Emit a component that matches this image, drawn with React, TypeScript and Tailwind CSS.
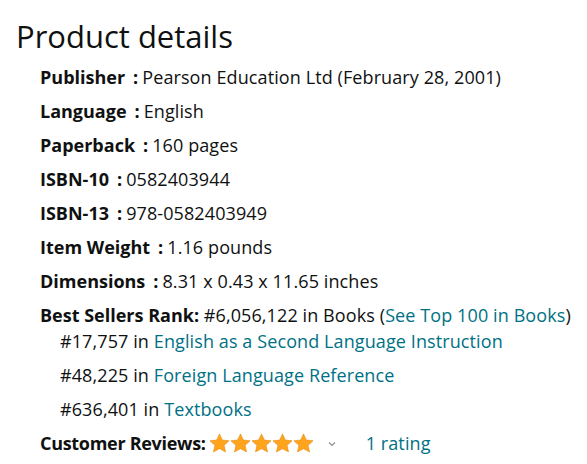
import React from "react";

const rows: [string, string][] = [
  ["Publisher", "Pearson Education Ltd (February 28, 2001)"],
  ["Language", "English"],
  ["Paperback", "160 pages"],
  ["ISBN-10", "0582403944"],
  ["ISBN-13", "978-0582403949"],
  ["Item Weight", "1.16 pounds"],
  ["Dimensions", "8.31 x 0.43 x 11.65 inches"],
];

const ranks: [string, string][] = [
  ["#17,757", "English as a Second Language Instruction"],
  ["#48,225", "Foreign Language Reference"],
  ["#636,401", "Textbooks"],
];

function Star() {
  return (
    <svg viewBox="0 0 24 24" className="w-[21px] h-[21px]">
      <path
        d="M12 1l3.3 7 7.7.9-5.7 5.2 1.6 7.6L12 17.9l-6.9 3.8 1.6-7.6L1 8.9l7.7-.9z"
        fill="#ffa41c"
        stroke="#e3850b"
        strokeWidth="0.6"
      />
    </svg>
  );
}

export default function App() {
  return (
    <div className="w-[587px] h-[464px] bg-white text-[#0f1111] font-['Open_Sans',sans-serif] overflow-hidden">
      <h1 className="pl-[16px] pt-[14px] text-[31px] leading-[44px]">Product details</h1>
      <ul className="pl-[40px] text-[18px] leading-[24px] tracking-[0.1px]">
        {rows.map(([k, v], i) => (
          <li key={k} className={i === 0 ? "mt-[7px]" : "mt-[10px]"}>
            <span className="font-bold tracking-normal">
              {k}
              <span className="ml-[8px] mr-[4px]">:</span>
            </span>
            {v}
          </li>
        ))}
        <li className="mt-[10px]">
          <span className="font-bold tracking-normal">Best Sellers Rank:</span> #6,056,122 in Books (
          <span className="text-[#007185]">See Top 100 in Books</span>)
          <ul className="pl-[20px]">
            {ranks.map(([n, c], i) => (
              <li key={n} className={i === 0 ? "mt-[2px]" : "mt-[10px]"}>
                {n} in <span className="text-[#007185]">{c}</span>
              </li>
            ))}
          </ul>
        </li>
        <li className="mt-[10px] flex items-center">
          <span className="font-bold tracking-[-0.3px]">Customer Reviews:</span>
          <span className="ml-[3px] flex">
            {[0, 1, 2, 3, 4].map((i) => (
              <Star key={i} />
            ))}
          </span>
          <svg viewBox="0 0 10 10" className="w-[10px] h-[10px] ml-[13px] mt-[2px]">
            <path d="M2 3.5l3 3 3-3" fill="none" stroke="#8a8f8f" strokeWidth="1.2" />
          </svg>
          <span className="ml-[29px] text-[#007185]">1 rating</span>
        </li>
      </ul>
    </div>
  );
}
